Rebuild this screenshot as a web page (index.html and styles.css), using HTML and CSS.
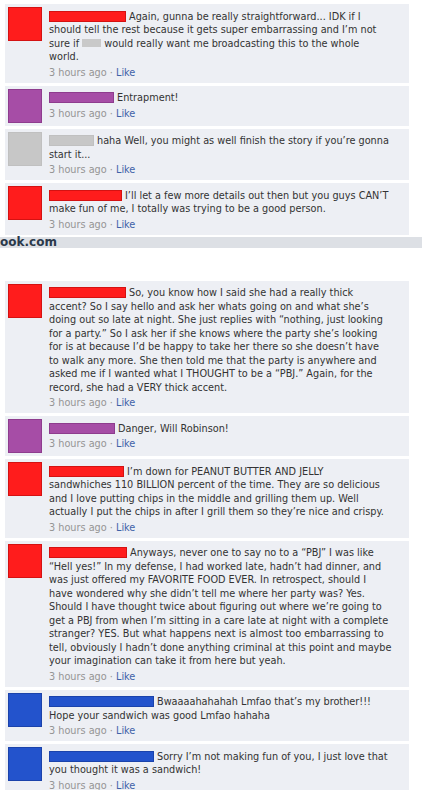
FILE: index.html
```html
<!DOCTYPE html>
<html lang="en">
<head>
<meta charset="utf-8">
<title>Comments</title>
<link rel="stylesheet" href="styles.css">
</head>
<body>
<div class="thread thread-top">
  <div class="comment">
    <div class="avatar red"></div>
    <div class="body">
      <p class="text"><span class="name red w77"></span>Again, gunna be really straightforward... IDK if I<br>should tell the rest because it gets super embarrassing and I’m not<br>sure if <span class="blur"></span> would really want me broadcasting this to the whole<br>world.</p>
      <p class="meta">3 hours ago · <a class="like">Like</a></p>
    </div>
  </div>
  <div class="comment">
    <div class="avatar purple"></div>
    <div class="body">
      <p class="text"><span class="name purple w65"></span>Entrapment!</p>
      <p class="meta">3 hours ago · <a class="like">Like</a></p>
    </div>
  </div>
  <div class="comment">
    <div class="avatar gray"></div>
    <div class="body">
      <p class="text"><span class="name gray w45"></span>haha Well, you might as well finish the story if you’re gonna<br>start it...</p>
      <p class="meta">3 hours ago · <a class="like">Like</a></p>
    </div>
  </div>
  <div class="comment">
    <div class="avatar red"></div>
    <div class="body">
      <p class="text"><span class="name red w73"></span>I’ll let a few more details out then but you guys CAN’T<br>make fun of me, I totally was trying to be a good person.</p>
      <p class="meta">3 hours ago · <a class="like">Like</a></p>
    </div>
  </div>
</div>
<div class="watermark">ook.com</div>
<div class="thread thread-bottom">
  <div class="comment">
    <div class="avatar red"></div>
    <div class="body">
      <p class="text"><span class="name red w77"></span>So, you know how I said she had a really thick<br>accent? So I say hello and ask her whats going on and what she’s<br>doing out so late at night. She just replies with “nothing, just looking<br>for a party.” So I ask her if she knows where the party she’s looking<br>for is at because I’d be happy to take her there so she doesn’t have<br>to walk any more. She then told me that the party is anywhere and<br>asked me if I wanted what I THOUGHT to be a “PBJ.” Again, for the<br>record, she had a VERY thick accent.</p>
      <p class="meta">3 hours ago · <a class="like">Like</a></p>
    </div>
  </div>
  <div class="comment">
    <div class="avatar purple"></div>
    <div class="body">
      <p class="text"><span class="name purple w66"></span>Danger, Will Robinson!</p>
      <p class="meta">3 hours ago · <a class="like">Like</a></p>
    </div>
  </div>
  <div class="comment">
    <div class="avatar red"></div>
    <div class="body">
      <p class="text"><span class="name red w75"></span>I’m down for PEANUT BUTTER AND JELLY<br>sandwhiches 110 BILLION percent of the time. They are so delicious<br>and I love putting chips in the middle and grilling them up. Well<br>actually I put the chips in after I grill them so they’re nice and crispy.</p>
      <p class="meta">3 hours ago · <a class="like">Like</a></p>
    </div>
  </div>
  <div class="comment">
    <div class="avatar red"></div>
    <div class="body">
      <p class="text"><span class="name red w78"></span>Anyways, never one to say no to a “PBJ” I was like<br>“Hell yes!” In my defense, I had worked late, hadn’t had dinner, and<br>was just offered my FAVORITE FOOD EVER. In retrospect, should I<br>have wondered why she didn’t tell me where her party was? Yes.<br>Should I have thought twice about figuring out where we’re going to<br>get a PBJ from when I’m sitting in a care late at night with a complete<br>stranger? YES. But what happens next is almost too embarrassing to<br>tell, obviously I hadn’t done anything criminal at this point and maybe<br>your imagination can take it from here but yeah.</p>
      <p class="meta">3 hours ago · <a class="like">Like</a></p>
    </div>
  </div>
  <div class="comment">
    <div class="avatar blue"></div>
    <div class="body">
      <p class="text"><span class="name blue w105"></span>Bwaaaahahahah Lmfao that’s my brother!!!<br>Hope your sandwich was good Lmfao hahaha</p>
      <p class="meta">3 hours ago · <a class="like">Like</a></p>
    </div>
  </div>
  <div class="comment">
    <div class="avatar blue"></div>
    <div class="body">
      <p class="text"><span class="name blue w105"></span>Sorry I’m not making fun of you, I just love that<br>you thought it was a sandwich!</p>
      <p class="meta">3 hours ago · <a class="like">Like</a></p>
    </div>
  </div>
</div>
</body>
</html>
```
FILE: styles.css
```css
html, body {
  margin: 0;
  padding: 0;
  background: #ffffff;
}
body {
  font-family: "DejaVu Sans Condensed", "DejaVu Sans", sans-serif;
  font-size: 10.8px;
  color: #333333;
}
.thread {
  margin-left: 5px;
  width: 404px;
  display: flex;
  flex-direction: column;
  gap: 3px;
}
.thread-top {
  padding-top: 4px;
}
.thread-bottom {
  margin-top: 33px;
}
.comment {
  background: #edeff4;
  display: flex;
  align-items: flex-start;
  gap: 7px;
  padding: 3px;
}
.avatar {
  flex: none;
  width: 34px;
  height: 34px;
  box-sizing: border-box;
  border: 1px solid transparent;
}
.body {
  flex: 1;
  padding-top: 2.5px;
}
.text {
  margin: 0;
  line-height: 13.5px;
  white-space: nowrap;
}
.meta {
  margin: 2px 0 0;
  line-height: 14px;
  color: #959595;
}
.like {
  color: #3f62a8;
}
.name {
  display: inline-block;
  height: 11px;
  vertical-align: -2px;
  margin-right: 3px;
  box-sizing: border-box;
  border: 1px solid transparent;
}
.blur {
  display: inline-block;
  width: 19px;
  height: 8px;
  vertical-align: 0;
  background: #c9c9c9;
}
.red { background: #ff1c1c; border-color: #d41212; }
.purple { background: #a64da6; border-color: #8e3c8e; }
.gray { background: #c7c7c7; border-color: #c0c0c0; }
.blue { background: #2353cc; border-color: #1b43ab; }
.w45 { width: 45px; }
.w65 { width: 65px; }
.w66 { width: 66px; }
.w73 { width: 73px; }
.w75 { width: 75px; }
.w77 { width: 77px; }
.w78 { width: 78px; }
.w105 { width: 105px; }
.watermark {
  margin-top: 2px;
  width: 422px;
  height: 11px;
  background: #dde0e5;
  color: #2c3a4b;
  font-family: "DejaVu Sans", sans-serif;
  font-weight: bold;
  font-size: 12px;
  line-height: 11px;
  white-space: nowrap;
}
```
